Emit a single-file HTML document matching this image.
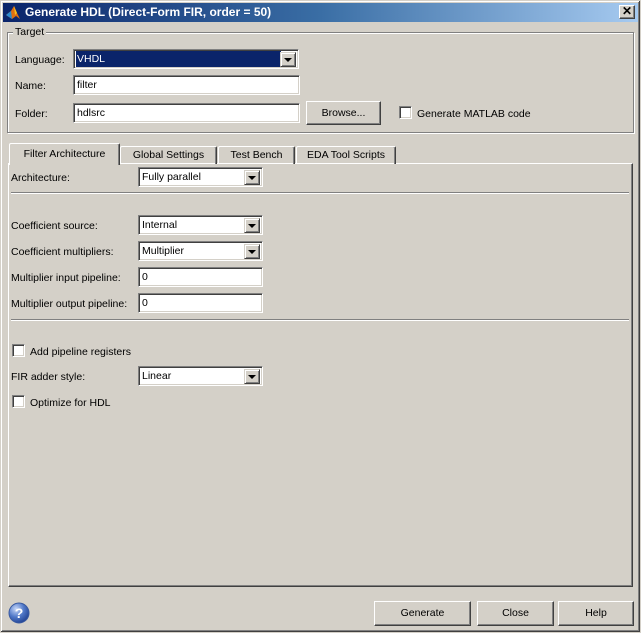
<!DOCTYPE html>
<html><head><meta charset="utf-8"><style>
*{box-sizing:border-box;margin:0;padding:0}
body{width:641px;height:633px;overflow:hidden;background:#d4d0c8;font-family:"Liberation Sans",sans-serif;font-size:10.5px;color:#000;position:relative}
.a{position:absolute}
.win{left:0;top:0;width:641px;height:633px;border:1px solid #d4d0c8;box-shadow:inset -1px -1px 0 #404040,inset 1px 1px 0 #fff,inset -2px -2px 0 #808080}
.title{left:3px;top:3px;width:635px;height:19px;background:linear-gradient(90deg,#0a246a 0%,#3a6ea5 50%,#a6caf0 100%);color:#fff;font-weight:bold;font-size:12px;line-height:19px;padding-left:22px}
.etch{border:1px solid #808080;box-shadow:1px 1px 0 #fff,inset 1px 1px 0 #fff}
.lbl{line-height:13px;white-space:nowrap;margin-top:1px}
.field{background:#fff;border:1px solid;border-color:#808080 #fff #fff #808080;box-shadow:inset 1px 1px 0 #404040,inset -1px -1px 0 #d4d0c8;padding:3px 0 0 3px;line-height:13px}
.arrow{position:absolute;right:2px;top:2px;width:16px;height:15px;background:#d4d0c8;border:1px solid;border-color:#d4d0c8 #404040 #404040 #d4d0c8;box-shadow:inset 1px 1px 0 #fff,inset -1px -1px 0 #808080}
.arrow:after{content:"";position:absolute;left:3px;top:5px;border-left:4px solid transparent;border-right:4px solid transparent;border-top:4px solid #000}
.btn{background:#d4d0c8;border:1px solid;border-color:#fff #404040 #404040 #fff;box-shadow:inset -1px -1px 0 #808080;text-align:center}
.cb{width:13px;height:13px;background:#fff;border:1px solid;border-color:#808080 #fff #fff #808080;box-shadow:inset 1px 1px 0 #404040,inset -1px -1px 0 #d4d0c8}
.tab{top:146px;height:18px;border:1px solid;border-color:#fff #404040 transparent #fff;border-bottom:none;box-shadow:inset -1px 0 0 #808080;text-align:center;line-height:17px;border-radius:2px 2px 0 0}
.sep{height:2px;border-top:1px solid #808080;border-bottom:1px solid #fff}
</style></head><body>
<div class="a win"></div>
<div class="a title">Generate HDL (Direct-Form FIR, order = 50)</div>
<svg class="a" style="left:5px;top:5px" width="16" height="15" viewBox="0 0 16 15"><path d="M1 10 L6 6 L9 1 L12 8 L15 14 L11 11 L7 14 Z" fill="#e07010"/><path d="M1 10 L6 6 L7 14 Z" fill="#2a8ad0"/><path d="M9 1 L12 8 L10 10 Z" fill="#f8c020"/></svg>
<div class="a btn" style="left:619px;top:5px;width:16px;height:14px;font-size:12px;line-height:11px;font-weight:bold">✕</div>

<div class="a etch" style="left:7px;top:32px;width:627px;height:101px"></div>
<div class="a lbl" style="left:13px;top:25px;background:#d4d0c8;padding:0 2px">Target</div>
<div class="a lbl" style="left:15px;top:53px">Language:</div>
<div class="a field" style="left:73px;top:49px;width:226px;height:20px;padding:1px 0 0 2px"><div style="background:#0a246a;color:#fff;width:205px;height:16px;line-height:16px;padding-left:1px">VHDL</div><div class="arrow"></div></div>
<div class="a lbl" style="left:15px;top:79px">Name:</div>
<div class="a field" style="left:73px;top:75px;width:227px;height:20px">filter</div>
<div class="a lbl" style="left:15px;top:107px">Folder:</div>
<div class="a field" style="left:73px;top:103px;width:227px;height:20px">hdlsrc</div>
<div class="a btn" style="left:306px;top:101px;width:75px;height:24px;line-height:22px">Browse...</div>
<div class="a cb" style="left:399px;top:106px"></div>
<div class="a lbl" style="left:417px;top:107px">Generate MATLAB code</div>

<div class="a" style="left:8px;top:163px;width:625px;height:424px;border:1px solid;border-color:#fff #404040 #404040 #fff;box-shadow:inset -1px -1px 0 #808080"></div>
<div class="a tab" style="left:120px;width:97px">Global Settings</div>
<div class="a tab" style="left:218px;width:77px">Test Bench</div>
<div class="a tab" style="left:296px;width:100px">EDA Tool Scripts</div>
<div class="a tab" style="left:9px;top:143px;width:111px;height:22px;background:#d4d0c8;line-height:21px">Filter Architecture</div>

<div class="a lbl" style="left:11px;top:171px">Architecture:</div>
<div class="a field" style="left:138px;top:167px;width:125px;height:20px">Fully parallel<div class="arrow"></div></div>
<div class="a sep" style="left:11px;top:192px;width:618px"></div>
<div class="a lbl" style="left:11px;top:219px">Coefficient source:</div>
<div class="a field" style="left:138px;top:215px;width:125px;height:20px">Internal<div class="arrow"></div></div>
<div class="a lbl" style="left:11px;top:245px">Coefficient multipliers:</div>
<div class="a field" style="left:138px;top:241px;width:125px;height:20px">Multiplier<div class="arrow"></div></div>
<div class="a lbl" style="left:11px;top:271px">Multiplier input pipeline:</div>
<div class="a field" style="left:138px;top:267px;width:125px;height:20px">0</div>
<div class="a lbl" style="left:11px;top:297px">Multiplier output pipeline:</div>
<div class="a field" style="left:138px;top:293px;width:125px;height:20px">0</div>
<div class="a sep" style="left:11px;top:319px;width:618px"></div>
<div class="a cb" style="left:12px;top:344px"></div>
<div class="a lbl" style="left:30px;top:345px">Add pipeline registers</div>
<div class="a lbl" style="left:11px;top:370px">FIR adder style:</div>
<div class="a field" style="left:138px;top:366px;width:125px;height:20px">Linear<div class="arrow"></div></div>
<div class="a cb" style="left:12px;top:395px"></div>
<div class="a lbl" style="left:30px;top:396px">Optimize for HDL</div>

<svg class="a" style="left:8px;top:602px" width="22" height="22" viewBox="0 0 22 22"><defs><radialGradient id="g" cx="0.35" cy="0.3" r="0.8"><stop offset="0" stop-color="#c8d8f8"/><stop offset="0.5" stop-color="#5078c8"/><stop offset="1" stop-color="#1a3a8a"/></radialGradient></defs><circle cx="11" cy="11" r="10" fill="url(#g)" stroke="#3a5aa0"/><text x="11" y="16" text-anchor="middle" fill="#fff" font-family="Liberation Sans" font-weight="bold" font-size="14">?</text></svg>
<div class="a btn" style="left:374px;top:601px;width:97px;height:25px;line-height:23px">Generate</div>
<div class="a btn" style="left:477px;top:601px;width:77px;height:25px;line-height:23px">Close</div>
<div class="a btn" style="left:558px;top:601px;width:76px;height:25px;line-height:23px">Help</div>
</body></html>
